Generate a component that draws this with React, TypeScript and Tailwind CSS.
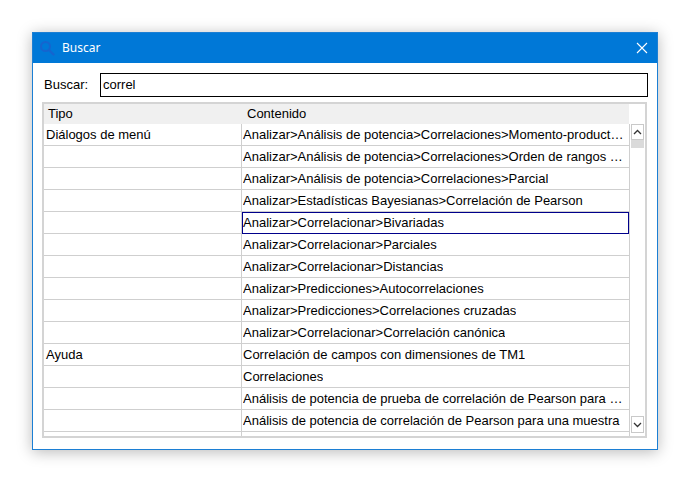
import React from "react";

const rows: { tipo: string; contenido: string; selected?: boolean }[] = [
  { tipo: "Diálogos de menú", contenido: "Analizar>Análisis de potencia>Correlaciones>Momento-producto de Pearson" },
  { tipo: "", contenido: "Analizar>Análisis de potencia>Correlaciones>Orden de rangos de Spearman" },
  { tipo: "", contenido: "Analizar>Análisis de potencia>Correlaciones>Parcial" },
  { tipo: "", contenido: "Analizar>Estadísticas Bayesianas>Correlación de Pearson" },
  { tipo: "", contenido: "Analizar>Correlacionar>Bivariadas", selected: true },
  { tipo: "", contenido: "Analizar>Correlacionar>Parciales" },
  { tipo: "", contenido: "Analizar>Correlacionar>Distancias" },
  { tipo: "", contenido: "Analizar>Predicciones>Autocorrelaciones" },
  { tipo: "", contenido: "Analizar>Predicciones>Correlaciones cruzadas" },
  { tipo: "", contenido: "Analizar>Correlacionar>Correlación canónica" },
  { tipo: "Ayuda", contenido: "Correlación de campos con dimensiones de TM1" },
  { tipo: "", contenido: "Correlaciones" },
  { tipo: "", contenido: "Análisis de potencia de prueba de correlación de Pearson para una muestra" },
  { tipo: "", contenido: "Análisis de potencia de correlación de Pearson para una muestra" },
  { tipo: "", contenido: "" },
];

export default function App() {
  return (
    <div className="w-[688px] h-[485px] bg-white pt-[32px] pl-[32px] font-['Liberation_Sans',Arial,sans-serif] text-[13px] text-black">
      {/* Window */}
      <div className="w-[626px] h-[418px] flex flex-col border border-[#1c7fd4] bg-white shadow-[0_2px_14px_rgba(0,0,0,0.28)]">
        {/* Title bar */}
        <div className="h-[30px] bg-[#0078d7] flex items-center pl-[6px] pr-[9px] shrink-0">
          <svg width="16" height="16" viewBox="0 0 16 16" className="shrink-0">
            <circle cx="6.5" cy="6.5" r="4.5" fill="none" stroke="#1565cf" strokeWidth="2" />
            <line x1="10" y1="10" x2="14.5" y2="14.5" stroke="#1565cf" strokeWidth="2.4" strokeLinecap="round" />
          </svg>
          <span className="ml-[7px] text-white text-[12px] font-['Noto_Sans',sans-serif]">Buscar</span>
          <div className="flex-1" />
          <svg width="12" height="12" viewBox="0 0 12 12">
            <path d="M1 1 L11 11 M11 1 L1 11" stroke="white" strokeWidth="1.1" />
          </svg>
        </div>

        {/* Body */}
        <div className="flex-1 min-h-0 flex flex-col pl-[9px] pr-[9px] pt-[10px] pb-[11px]">
          <div className="flex items-center shrink-0">
            <span className="w-[58px] pl-[2px]">Buscar:</span>
            <div className="flex-1 h-[24px] border border-black flex items-center pl-[2px]">correl</div>
          </div>

          <div className="mt-[5px] w-[605px] flex-1 min-h-0 border-2 border-[#d4d4d4] flex flex-col overflow-hidden">
            {/* header */}
            <div className="h-[20px] flex shrink-0">
              <div className="w-[585px] bg-[#f0f0f0] flex items-center">
                <span className="w-[198px] pl-[4px]">Tipo</span>
                <span className="pl-[5px]">Contenido</span>
              </div>
              <div className="flex-1 bg-white" />
            </div>
            <div className="flex-1 min-h-0 flex overflow-hidden">
              <div className="w-[585px] flex flex-col overflow-hidden">
                {rows.map((r, i) => (
                  <div key={i} className="h-[22px] flex shrink-0 border-b border-[#cfcfcf]">
                    <div className="w-[198px] pl-[2px] border-r border-[#cfcfcf] flex items-center truncate">{r.tipo}</div>
                    <div
                      className={
                        r.selected
                          ? "flex-1 min-w-0 border border-[#00008b] flex items-center pl-[0px] -mb-px"
                          : "flex-1 min-w-0 flex items-center pl-[1px] pr-[3px]"
                      }
                    >
                      <span className="truncate">{r.contenido}</span>
                    </div>
                  </div>
                ))}
              </div>
              {/* scrollbar */}
              <div className="w-[16px] border-l border-[#cfcfcf] flex flex-col justify-between bg-white">
                <div className="flex flex-col">
                  <div className="h-[16px] mx-[1px] border border-[#c9c9c9] bg-white flex items-center justify-center">
                    <svg width="9" height="6" viewBox="0 0 9 6">
                      <path d="M1 5 L4.5 1.5 L8 5" fill="none" stroke="#333" strokeWidth="1.3" />
                    </svg>
                  </div>
                  <div className="h-[8px] mx-[1px] bg-[#dadada]" />
                </div>
                <div className="h-[17px] mx-[1px] mb-[3px] border border-[#c9c9c9] bg-white flex items-center justify-center">
                  <svg width="9" height="6" viewBox="0 0 9 6">
                    <path d="M1 1 L4.5 4.5 L8 1" fill="none" stroke="#333" strokeWidth="1.3" />
                  </svg>
                </div>
              </div>
            </div>
          </div>
        </div>
      </div>
    </div>
  );
}
